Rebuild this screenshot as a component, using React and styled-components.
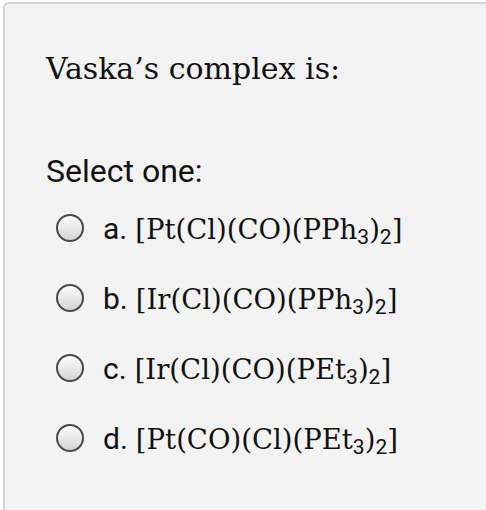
import React from "react";
import styled, { createGlobalStyle } from "styled-components";

const GlobalStyle = createGlobalStyle`
  html, body {
    margin: 0;
    padding: 0;
    background: #ffffff;
    overflow: hidden;
  }
`;

const Card = styled.div`
  margin: 2px -10px 0 3px;
  height: 530px;
  box-sizing: border-box;
  background: #f3f3f3;
  border: 2px solid #d4d4d4;
  border-radius: 6px;
  padding: 45px 0 0 41px;
`;

const Question = styled.div`
  font-family: "DejaVu Serif", serif;
  font-size: 30px;
  color: #111;
  line-height: 40px;
`;

const Prompt = styled.div`
  margin-top: 62px;
  font-family: Roboto, "Noto Sans", sans-serif;
  font-size: 32px;
  color: #111;
  line-height: 40px;
`;

const Options = styled.div`
  margin-top: 17px;
  display: flex;
  flex-direction: column;
  gap: 30px;
  padding-left: 10px;
`;

const Option = styled.label`
  display: flex;
  align-items: center;
  height: 40px;
  gap: 19px;
  color: #111;
`;

const Radio = styled.span`
  width: 28px;
  height: 28px;
  box-sizing: border-box;
  border-radius: 50%;
  border: 2px solid #4a4a4a;
  background: linear-gradient(#fdfdfd, #d4d4d4);
  flex-shrink: 0;
`;

const Letter = styled.span`
  font-family: Roboto, "Noto Sans", sans-serif;
  font-size: 30px;
  margin-right: 8px;
`;

const Formula = styled.span`
  font-family: "DejaVu Serif", serif;
  font-size: 27.5px;
`;

const Sub = styled.sub`
  font-family: Roboto, sans-serif;
  font-size: 21px;
  vertical-align: -5px;
  line-height: 0;
`;

const options = [
  { letter: "a.", parts: ["[Pt(Cl)(CO)(PPh", "3", ")", "2", "]"] },
  { letter: "b.", parts: ["[Ir(Cl)(CO)(PPh", "3", ")", "2", "]"] },
  { letter: "c.", parts: ["[Ir(Cl)(CO)(PEt", "3", ")", "2", "]"] },
  { letter: "d.", parts: ["[Pt(CO)(Cl)(PEt", "3", ")", "2", "]"] },
];

export default function App() {
  return (
    <>
      <GlobalStyle />
      <Card>
        <Question>Vaska’s complex is:</Question>
        <Prompt>Select one:</Prompt>
        <Options>
          {options.map((o) => (
            <Option key={o.letter}>
              <Radio />
              <span>
                <Letter>{o.letter}</Letter>
                <Formula>
                  {o.parts[0]}
                  <Sub>{o.parts[1]}</Sub>
                  {o.parts[2]}
                  <Sub>{o.parts[3]}</Sub>
                  {o.parts[4]}
                </Formula>
              </span>
            </Option>
          ))}
        </Options>
      </Card>
    </>
  );
}
